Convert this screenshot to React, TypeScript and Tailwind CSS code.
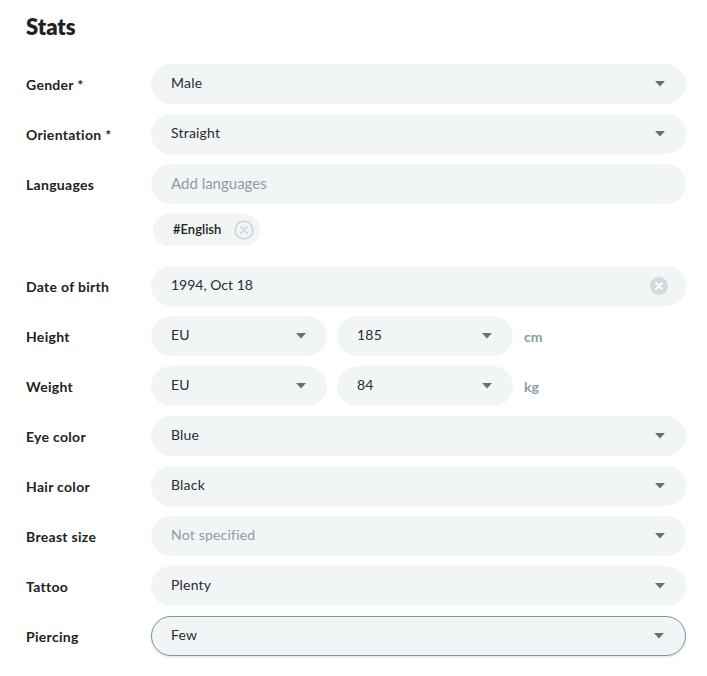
import React from "react";

const Caret = () => (
  <svg width="10" height="6" viewBox="0 0 10 6" className="shrink-0">
    <path d="M0 0h10L5 5.5z" fill="#6b6f73" />
  </svg>
);

const ClearFilled = () => (
  <svg width="18" height="18" viewBox="0 0 18 18" className="shrink-0">
    <circle cx="9" cy="9" r="9" fill="#d3d9dd" />
    <path d="M6 6l6 6M12 6l-6 6" stroke="#fff" strokeWidth="2" strokeLinecap="round" />
  </svg>
);

const ClearOutline = () => (
  <svg width="20" height="20" viewBox="0 0 20 20" className="shrink-0">
    <circle cx="10" cy="10" r="8.8" fill="none" stroke="#d3d9dd" strokeWidth="2" />
    <path d="M7 7l6 6M13 7l-6 6" stroke="#d3d9dd" strokeWidth="2" strokeLinecap="round" />
  </svg>
);

interface SelectProps {
  value: string;
  placeholder?: boolean;
  active?: boolean;
  className?: string;
}

const Select: React.FC<SelectProps> = ({ value, placeholder, active, className = "" }) => (
  <div
    className={`flex h-10 items-center justify-between rounded-full bg-[#f2f5f6] pl-5 pr-[21px] text-sm tracking-[0.2px] ${
      active ? "border border-[#7d93a8] pl-[19px] pr-5 shadow-[0_1px_3px_rgba(0,0,0,0.12)]" : ""
    } ${placeholder ? "text-[#8c9ba7]" : "text-[#2b2b33]"} ${className}`}
  >
    <span className="pb-[2px]">{value}</span>
    <Caret />
  </div>
);

const Row: React.FC<{ label: string; children: React.ReactNode }> = ({ label, children }) => (
  <div className="flex items-center">
    <div className="w-[125px] shrink-0 pt-[1px] text-[14px] font-bold tracking-[0.3px] text-[#222]">{label}</div>
    <div className="flex-1">{children}</div>
  </div>
);

const selects: { label: string; value: string; placeholder?: boolean; active?: boolean }[] = [
  { label: "Eye color", value: "Blue" },
  { label: "Hair color", value: "Black" },
  { label: "Breast size", value: "Not specified", placeholder: true },
  { label: "Tattoo", value: "Plenty" },
  { label: "Piercing", value: "Few", active: true },
];

export default function App() {
  return (
    <div className="min-h-[676px] bg-white pl-[26px] pr-[21px] pt-[14px]" style={{ fontFamily: "Lato, 'Open Sans', sans-serif" }}>
      <h2 className="text-[22px] font-extrabold text-[#222] leading-[26px]">Stats</h2>

      <div className="mt-6 flex flex-col gap-[10px]">
        <Row label="Gender *">
          <Select value="Male" />
        </Row>
        <Row label="Orientation *">
          <Select value="Straight" />
        </Row>
        <Row label="Languages">
          <div className="flex h-10 items-center rounded-full bg-[#f2f5f6] px-5 pb-[2px] text-[15px] text-[#8c9ba7]">
            Add languages
          </div>
        </Row>
        <div className="pl-[127px]">
          <div className="inline-flex h-8 items-center gap-[13px] rounded-full bg-[#f2f5f6] pl-5 pr-[6px] text-[13px] font-semibold text-[#222]">
            #English
            <ClearOutline />
          </div>
        </div>
        <div className="mt-[10px]">
          <Row label="Date of birth">
            <div className="flex h-10 items-center justify-between rounded-full bg-[#f2f5f6] pl-5 pr-[18px] text-sm text-[#2b2b33]">
              <span className="pb-[2px]">1994, Oct 18</span>
              <ClearFilled />
            </div>
          </Row>
        </div>
        <Row label="Height">
          <div className="flex items-center gap-[10px]">
            <Select value="EU" className="w-[176px]" />
            <Select value="185" className="w-[176px]" />
            <span className="pl-[1px] pt-[1px] text-[14px] font-bold text-[#8c9ba7]">cm</span>
          </div>
        </Row>
        <Row label="Weight">
          <div className="flex items-center gap-[10px]">
            <Select value="EU" className="w-[176px]" />
            <Select value="84" className="w-[176px]" />
            <span className="pl-[1px] pt-[1px] text-[14px] font-bold text-[#8c9ba7]">kg</span>
          </div>
        </Row>
        {selects.map((s) => (
          <Row key={s.label} label={s.label}>
            <Select value={s.value} placeholder={s.placeholder} active={s.active} />
          </Row>
        ))}
      </div>
    </div>
  );
}
